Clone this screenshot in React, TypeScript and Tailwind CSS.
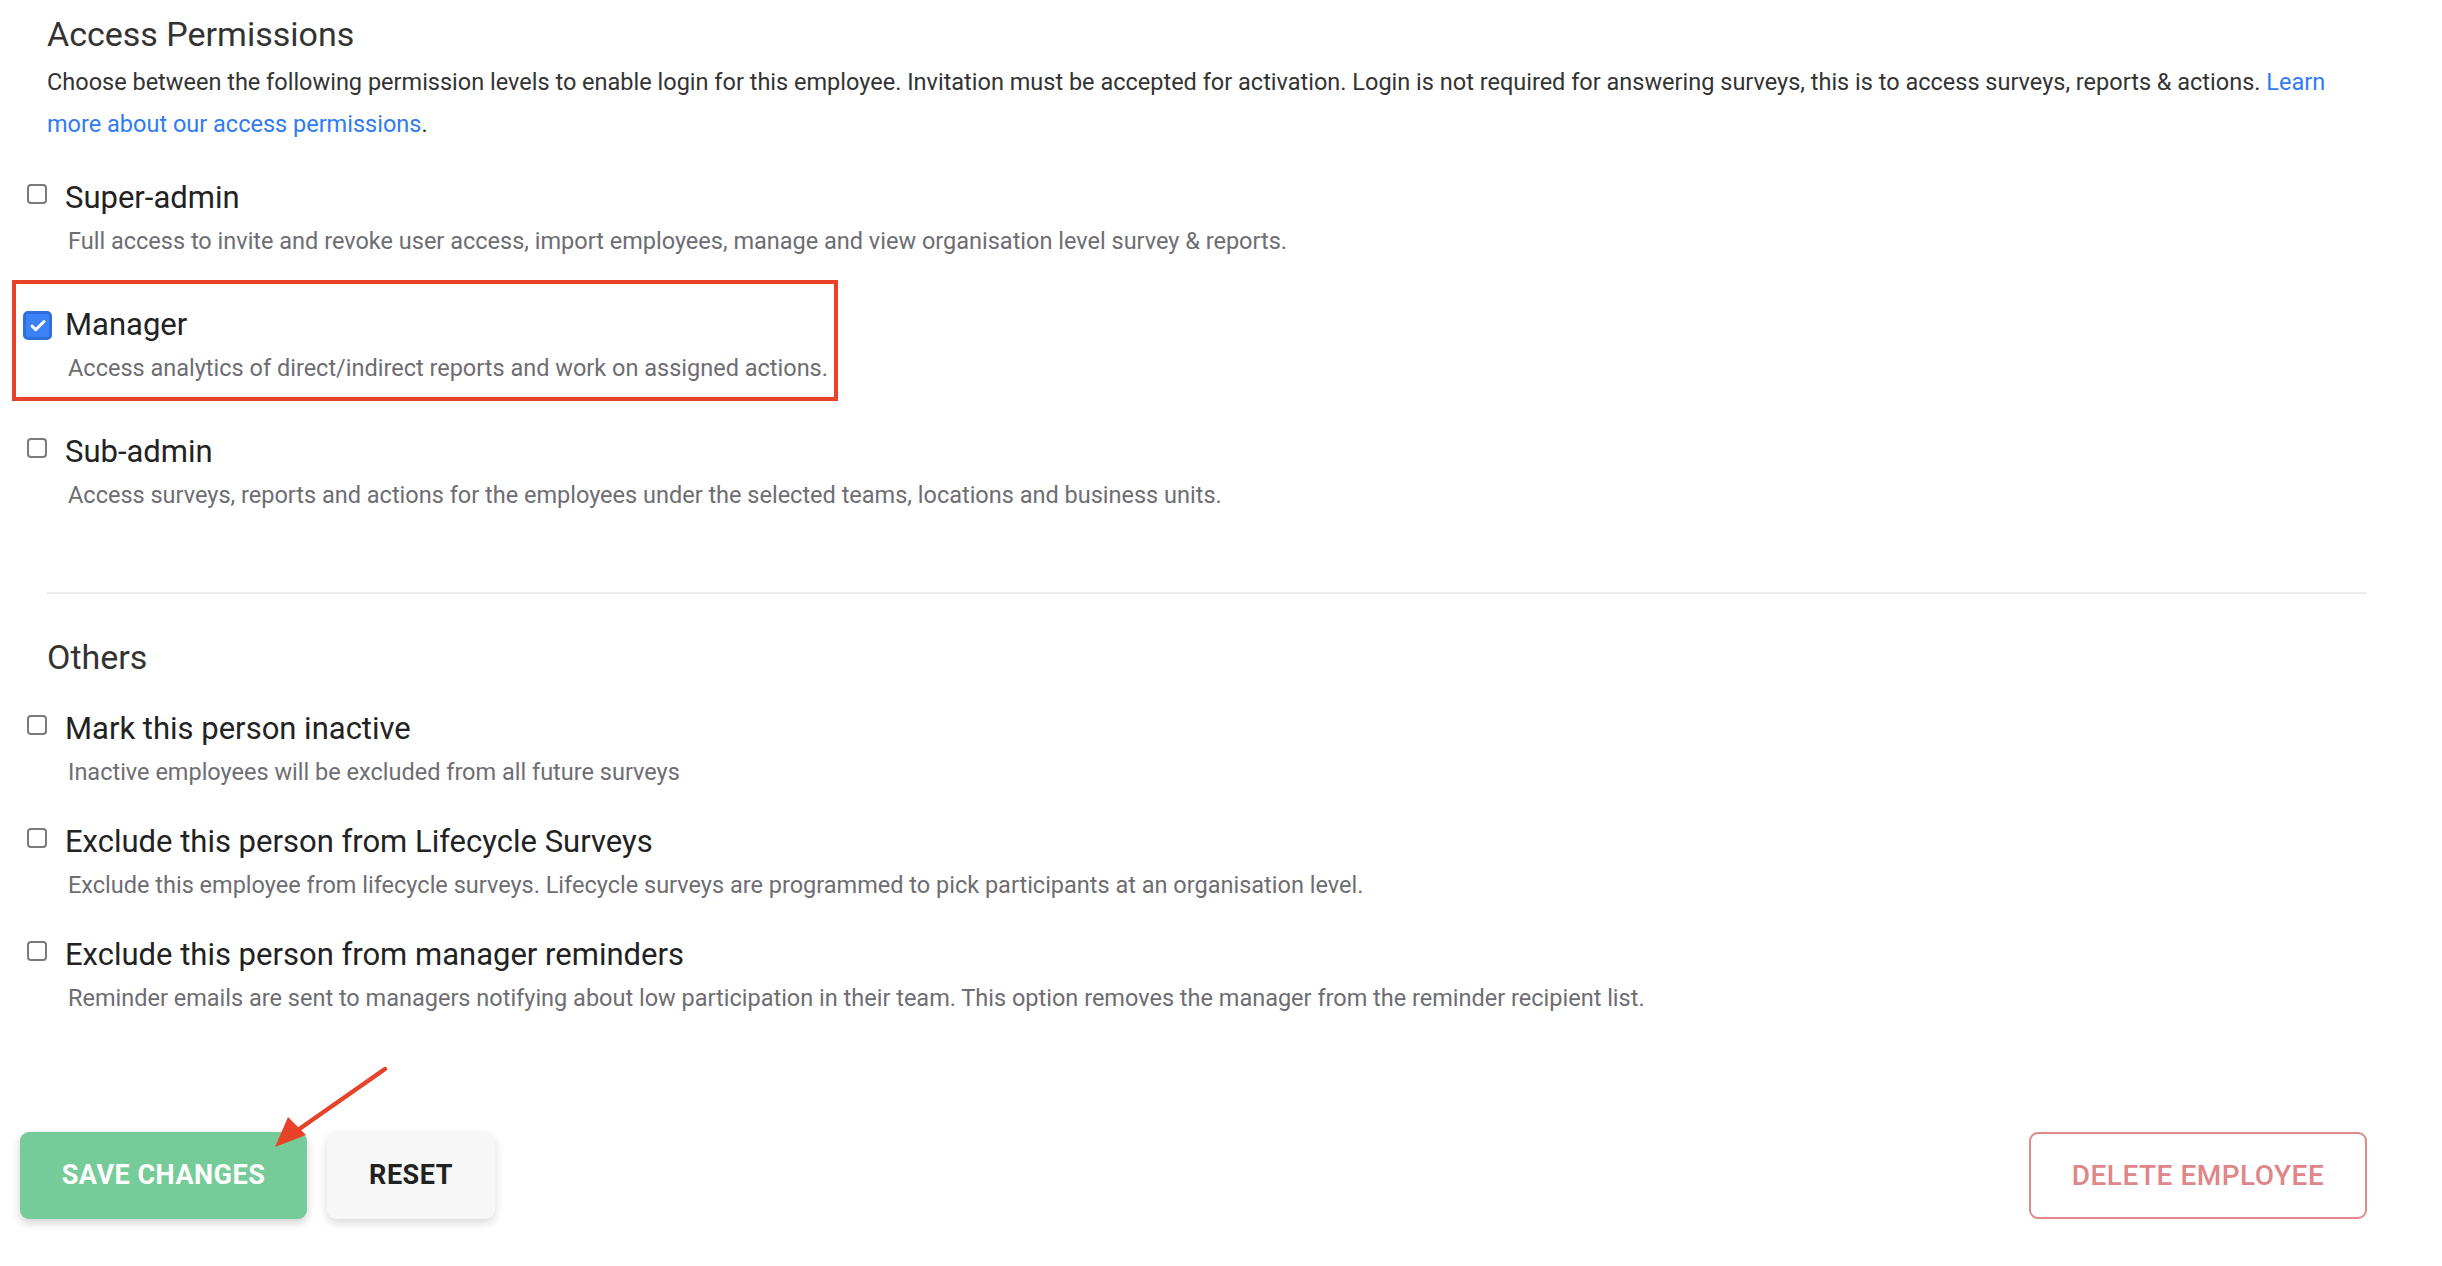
import { Check } from "lucide-react";

type Item = { label: string; desc: string; checked?: boolean };

const permissions: Item[] = [
  {
    label: "Super-admin",
    desc: "Full access to invite and revoke user access, import employees, manage and view organisation level survey & reports.",
  },
  {
    label: "Manager",
    desc: "Access analytics of direct/indirect reports and work on assigned actions.",
    checked: true,
  },
  {
    label: "Sub-admin",
    desc: "Access surveys, reports and actions for the employees under the selected teams, locations and business units.",
  },
];

const others: Item[] = [
  { label: "Mark this person inactive", desc: "Inactive employees will be excluded from all future surveys" },
  {
    label: "Exclude this person from Lifecycle Surveys",
    desc: "Exclude this employee from lifecycle surveys. Lifecycle surveys are programmed to pick participants at an organisation level.",
  },
  {
    label: "Exclude this person from manager reminders",
    desc: "Reminder emails are sent to managers notifying about low participation in their team. This option removes the manager from the reminder recipient list.",
  },
];

function Box({ checked }: { checked?: boolean }) {
  if (checked) {
    return (
      <span className="mt-[4px] flex h-[29px] w-[29px] shrink-0 items-center justify-center rounded-[5px] border-[3px] border-[#2f6fdc] bg-[#3b82f6]">
        <Check className="h-[18px] w-[18px] text-white" strokeWidth={4} />
      </span>
    );
  }
  return <span className="mt-[4px] ml-[4px] mr-[5px] h-[20px] w-[20px] shrink-0 rounded-[4px] border-2 border-[#7a7a7a] bg-white" />;
}

function Option({ item }: { item: Item }) {
  return (
    <div className="flex items-start gap-[13px]">
      <Box checked={item.checked} />
      <div className="flex flex-col">
        <p className="text-[31px] leading-[36px] text-[#222]">{item.label}</p>
        <p className="mt-[9px] pl-[3px] text-[23.5px] leading-[32px] text-[#6d6d72]">{item.desc}</p>
      </div>
    </div>
  );
}

export default function App() {
  return (
    <div className="min-h-screen w-full bg-white pr-[75px] pt-[14px] font-['Roboto',sans-serif]">
      <div className="pl-[47px]">
        <h2 className="text-[34px] leading-[40px] text-[#333]">Access Permissions</h2>
        <p className="mt-[7px] text-[23.5px] leading-[42px] text-[#333]">
          Choose between the following permission levels to enable login for this employee. Invitation must be accepted for
          activation. Login is not required for answering surveys, this is to access surveys, reports &amp; actions.{" "}
          <a className="text-[#2f7bf5]">Learn more about our access permissions</a>.
        </p>
      </div>

      <div className="mt-[35px] flex flex-col gap-[50px] pl-[23px]">
        {permissions.map((p) =>
          p.checked ? (
            <div key={p.label} className="relative">
              <Option item={p} />
              <span className="pointer-events-none absolute left-[-11px] top-[-27px] h-[121px] w-[826px] border-[4px] border-[#e8432a]" />
            </div>
          ) : (
            <Option key={p.label} item={p} />
          ),
        )}
      </div>

      <div className="ml-[47px] mt-[81px] h-[2px] bg-[#ececec]" />

      <div className="pl-[47px] pt-[43px]">
        <h2 className="text-[34px] leading-[40px] text-[#333]">Others</h2>
      </div>
      <div className="mt-[34px] flex flex-col gap-[36px] pl-[23px]">
        {others.map((o) => (
          <Option key={o.label} item={o} />
        ))}
      </div>

      <div className="relative mt-[118px] flex items-center pl-[20px]">
        <button className="h-[87px] w-[287px] rounded-[9px] bg-[#76cc98] text-[27px] font-bold tracking-[0.5px] text-white shadow-[0_4px_10px_rgba(0,0,0,0.18)]">
          SAVE CHANGES
        </button>
        <button className="ml-[20px] h-[87px] w-[168px] rounded-[9px] bg-[#f7f7f7] text-[27px] font-bold tracking-[0.5px] text-[#222] shadow-[0_4px_10px_rgba(0,0,0,0.15)]">
          RESET
        </button>
        <button className="ml-auto h-[87px] w-[338px] rounded-[9px] border-2 border-[#e08a8c] bg-white text-[28px] font-medium tracking-[0.5px] text-[#e0868a]">
          DELETE EMPLOYEE
        </button>
        <svg className="pointer-events-none absolute left-[250px] top-[-70px]" width="150" height="100" viewBox="0 0 150 100">
          <line x1="135" y1="7" x2="45" y2="70" stroke="#e8432a" strokeWidth="4.5" strokeLinecap="round" />
          <polygon points="25,85 38,55 56,73" fill="#e8432a" />
        </svg>
      </div>
    </div>
  );
}
